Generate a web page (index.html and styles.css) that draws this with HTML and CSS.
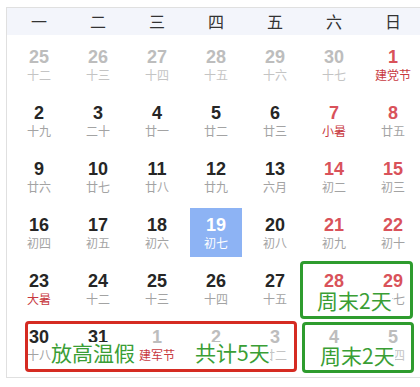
FILE: index.html
```html
<!DOCTYPE html>
<html lang="zh">
<head>
<meta charset="utf-8">
<link rel="stylesheet" href="styles.css">
</head>
<body>
<div class="cal">
  <div class="head">
    <span>一</span><span>二</span><span>三</span><span>四</span><span>五</span><span>六</span><span>日</span>
  </div>
  <div class="grid">
    <div class="cell other"><b>25</b><i>十二</i></div>
    <div class="cell other"><b>26</b><i>十三</i></div>
    <div class="cell other"><b>27</b><i>十四</i></div>
    <div class="cell other"><b>28</b><i>十五</i></div>
    <div class="cell other"><b>29</b><i>十六</i></div>
    <div class="cell other"><b>30</b><i>十七</i></div>
    <div class="cell wk"><b>1</b><i class="fest">建党节</i></div>

    <div class="cell"><b>2</b><i>十九</i></div>
    <div class="cell"><b>3</b><i>二十</i></div>
    <div class="cell"><b>4</b><i>廿一</i></div>
    <div class="cell"><b>5</b><i>廿二</i></div>
    <div class="cell"><b>6</b><i>廿三</i></div>
    <div class="cell wk"><b>7</b><i class="fest">小暑</i></div>
    <div class="cell wk"><b>8</b><i>廿五</i></div>

    <div class="cell"><b>9</b><i>廿六</i></div>
    <div class="cell"><b>10</b><i>廿七</i></div>
    <div class="cell"><b>11</b><i>廿八</i></div>
    <div class="cell"><b>12</b><i>廿九</i></div>
    <div class="cell"><b>13</b><i>六月</i></div>
    <div class="cell wk"><b>14</b><i>初二</i></div>
    <div class="cell wk"><b>15</b><i>初三</i></div>

    <div class="cell"><b>16</b><i>初四</i></div>
    <div class="cell"><b>17</b><i>初五</i></div>
    <div class="cell"><b>18</b><i>初六</i></div>
    <div class="cell today"><b>19</b><i>初七</i></div>
    <div class="cell"><b>20</b><i>初八</i></div>
    <div class="cell wk"><b>21</b><i>初九</i></div>
    <div class="cell wk"><b>22</b><i>初十</i></div>

    <div class="cell"><b>23</b><i class="fest">大暑</i></div>
    <div class="cell"><b>24</b><i>十二</i></div>
    <div class="cell"><b>25</b><i>十三</i></div>
    <div class="cell"><b>26</b><i>十四</i></div>
    <div class="cell"><b>27</b><i>十五</i></div>
    <div class="cell wk"><b>28</b><i>十六</i></div>
    <div class="cell wk"><b>29</b><i>十七</i></div>

    <div class="cell"><b>30</b><i>十八</i></div>
    <div class="cell"><b>31</b><i>十九</i></div>
    <div class="cell other"><b>1</b><i class="fest">建军节</i></div>
    <div class="cell other"><b>2</b><i>廿一</i></div>
    <div class="cell other"><b>3</b><i>廿二</i></div>
    <div class="cell other"><b>4</b><i>廿三</i></div>
    <div class="cell other"><b>5</b><i>廿四</i></div>
  </div>
</div>

<div class="mark red m-hot"></div>
<div class="mark green m-wk1"></div>
<div class="mark green m-wk2"></div>
<div class="label l-hot">放高温假</div>
<div class="label l-total">共计5天</div>
<div class="label l-wk1">周末2天</div>
<div class="label l-wk2">周末2天</div>
</body>
</html>
```

FILE: styles.css
```css
html, body {
  margin: 0;
  padding: 0;
  overflow: hidden;
  background: #fff;
}
body {
  width: 420px;
  height: 387px;
  position: relative;
  font-family: "Noto Sans CJK SC", "Noto Sans", sans-serif;
}
.cal {
  margin: 7px 0 0 6px;
  width: 418px;
  border: 1px solid #e0e0e0;
}
.head {
  display: grid;
  grid-template-columns: repeat(7, 52px);
  column-gap: 7px;
  padding: 0 6px;
  height: 27px;
  background: #f3f5fb;
}
.head span {
  text-align: center;
  line-height: 27px;
  font-size: 16px;
  color: #333;
}
.grid {
  display: grid;
  grid-template-columns: repeat(7, 52px);
  grid-auto-rows: 49px;
  gap: 7px;
  padding: 5px 6px 8px;
}
.cell {
  display: flex;
  flex-direction: column;
  align-items: center;
  padding-top: 8px;
  box-sizing: border-box;
}
.cell b {
  font-family: "Liberation Sans", Arial, sans-serif;
  font-weight: bold;
  font-size: 18px;
  line-height: 18px;
  color: #262626;
}
.cell i {
  font-style: normal;
  font-size: 12px;
  line-height: 18px;
  color: #a3a3a3;
  white-space: nowrap;
}
.cell.wk b {
  color: #d9525a;
}
.cell i.fest {
  color: #c8393f;
}
.cell.other b {
  color: #bdbdbd;
}
.cell.other i {
  color: #c4c4c4;
}
.cell.other i.fest {
  color: #c8393f;
}
.cell.today {
  background: #8db3f4;
}
.cell.today b,
.cell.today i {
  color: #fff;
}

.mark {
  position: absolute;
  box-sizing: border-box;
  border-radius: 4px;
  border: 3px solid;
}
.red {
  border-color: #d52b22;
}
.green {
  border-color: #2e9c2e;
}
.m-hot {
  left: 25px;
  top: 321px;
  width: 272px;
  height: 51px;
}
.m-wk1 {
  left: 300px;
  top: 261px;
  width: 113px;
  height: 58px;
}
.m-wk2 {
  left: 302px;
  top: 322px;
  width: 112px;
  height: 51px;
}
.label {
  position: absolute;
  height: 20px;
  line-height: 20px;
  font-size: 21px;
  color: #3a9e35;
  background: #fff;
  white-space: nowrap;
}
.l-hot {
  left: 51px;
  top: 342px;
}
.l-total {
  left: 195px;
  top: 342px;
}
.l-wk1 {
  left: 317px;
  top: 290px;
}
.l-wk2 {
  left: 320px;
  top: 345px;
}
```
